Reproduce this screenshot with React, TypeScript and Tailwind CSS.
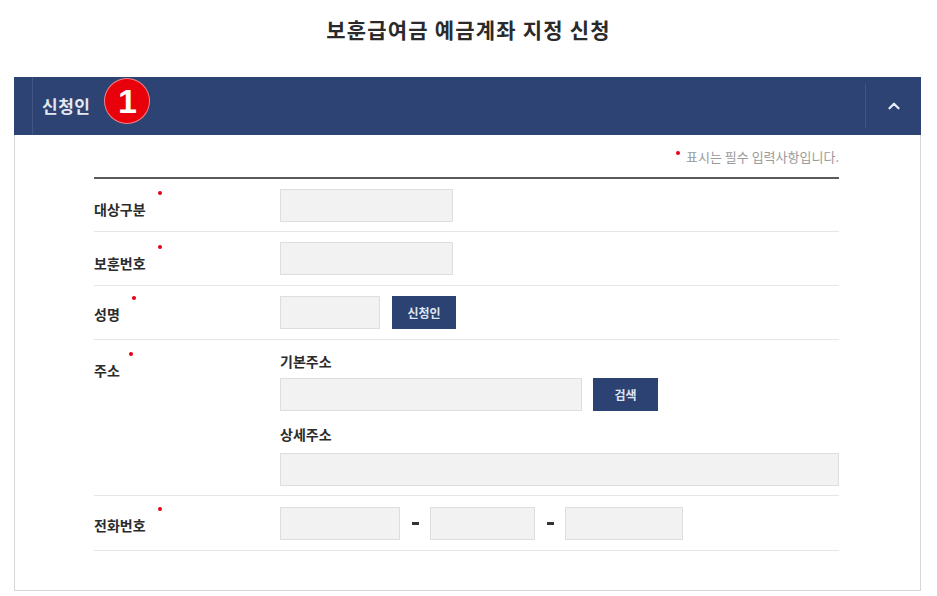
import type { FC, ReactNode } from "react";
import { ChevronUp } from "lucide-react";

const font = { fontFamily: '"Noto Sans CJK KR", "Noto Sans", sans-serif' };

// Required-field label with the little red dot up at its top right
const Label: FC<{ text: string; dotX: string; className?: string }> = ({ text, dotX, className = "" }) => (
  <div className={`w-[186px] shrink-0 ${className}`}>
    <span className="relative inline-block text-[14px] font-bold leading-[18px] text-[#2b2b2b]">
      {text}
      <span className={`absolute -top-[9px] h-[4px] w-[4px] rounded-full bg-[#e60012] ${dotX}`} />
    </span>
  </div>
);

const Field: FC<{ className?: string }> = ({ className = "" }) => (
  <div className={`h-[33px] border border-[#dedede] bg-[#f2f2f2] ${className}`} />
);

const NavyButton: FC<{ children: ReactNode; className?: string }> = ({ children, className = "" }) => (
  <button
    className={`flex h-[33px] items-center justify-center bg-[#2c4272] text-[12px] font-bold text-[#dfe5f0] ${className}`}
  >
    {children}
  </button>
);

const Row: FC<{ children: ReactNode; className?: string }> = ({ children, className = "" }) => (
  <div className={`flex border-b border-[#e6e6e6] ${className}`}>{children}</div>
);

const Dash = () => (
  <div className="flex w-[30px] items-center justify-center">
    <span className="h-[3px] w-[7px] bg-[#333]" />
  </div>
);

export default function App() {
  return (
    <div className="min-h-[596px] w-[937px] bg-white" style={font}>
      <h1 className="pt-[15px] text-center text-[21px] font-semibold leading-[28px] tracking-[1.2px] text-[#2a2a2a]">
        보훈급여금 예금계좌 지정 신청
      </h1>

      <div className="ml-[14px] mt-[34px] w-[907px]">
        {/* panel header */}
        <div className="flex h-[58px] items-center bg-[#2d4373]">
          <div className="h-full w-[19px] border-r border-white/10" />
          <span className="ml-[9px] text-[17px] font-bold tracking-[0.5px] text-[#e3e8f1]">신청인</span>
          <span
            className="ml-[14px] -mt-[10px] flex h-[46px] w-[46px] items-center justify-center rounded-full border border-white/50 bg-[#e8000b] text-[34px] font-bold leading-none text-white"
            style={{ fontFamily: '"Liberation Sans", Arial, sans-serif' }}
          >
            1
          </span>
          <div className="flex-1" />
          <div className="flex h-[44px] w-[56px] items-center justify-center border-l border-white/10">
            <ChevronUp size={18} strokeWidth={3} className="text-[#e8ecf4]" />
          </div>
        </div>

        {/* panel body */}
        <div className="border-x border-b border-[#d6d6d6] pb-[39px] pl-[79px] pr-[81px] pt-[15px]">
          <div className="flex items-center justify-end text-[13px] leading-[14px] text-[#9a9a9a]">
            <span className="mb-[9px] mr-[6px] h-[4px] w-[4px] rounded-full bg-[#e60012]" />
            표시는 필수 입력사항입니다.
          </div>
          <div className="mt-[13px] h-[2px] bg-[#5a5a5a]" />

          <Row className="h-[53px] items-center">
            <Label text="대상구분" dotX="left-[64px]" className="pt-[5px]" />
            <Field className="w-[173px]" />
          </Row>

          <Row className="h-[54px] items-center">
            <Label text="보훈번호" dotX="left-[64px]" className="pt-[7px]" />
            <Field className="w-[173px]" />
          </Row>

          <Row className="h-[54px] items-center">
            <Label text="성명" dotX="left-[38px]" />
            <Field className="w-[100px]" />
            <NavyButton className="ml-[12px] w-[64px]">신청인</NavyButton>
          </Row>

          <Row className="pb-[9px] pt-[12px]">
            <Label text="주소" dotX="left-[35px]" className="pt-[5px]" />
            <div className="flex flex-1 flex-col">
              <span className="text-[14px] font-bold leading-[18px] text-[#2b2b2b]">기본주소</span>
              <div className="mt-[8px] flex">
                <Field className="w-[302px]" />
                <NavyButton className="ml-[11px] w-[65px]">검색</NavyButton>
              </div>
              <span className="mt-[14px] text-[14px] font-bold leading-[18px] text-[#2b2b2b]">상세주소</span>
              <Field className="mt-[10px] w-full" />
            </div>
          </Row>

          <Row className="h-[55px] items-center">
            <Label text="전화번호" dotX="left-[64px]" className="pt-[2px]" />
            <Field className="w-[120px]" />
            <Dash />
            <Field className="w-[105px]" />
            <Dash />
            <Field className="w-[118px]" />
          </Row>
        </div>
      </div>
    </div>
  );
}
